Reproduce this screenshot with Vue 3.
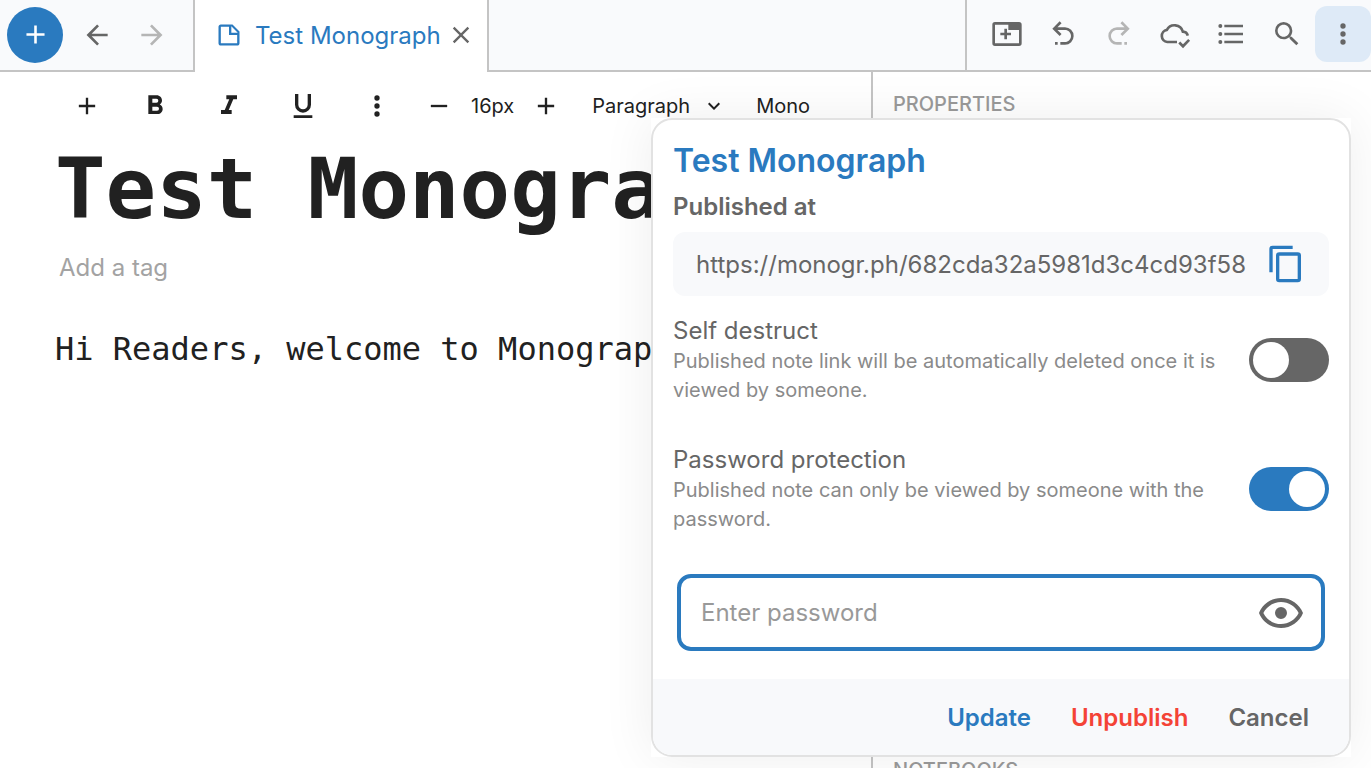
<template>
  <div class="app">
    <!-- top bar -->
    <header class="topbar">
      <div class="bar-left">
        <button class="new-btn"><svg class="ic-new" viewBox="0 0 24 24"><path :d="icons.plus" /></svg></button>
        <svg class="ic back" viewBox="0 0 24 24"><path :d="icons.back" /></svg>
        <svg class="ic faded" viewBox="0 0 24 24"><path :d="icons.forward" /></svg>
      </div>
      <div class="tab">
        <svg class="ic-note" viewBox="0 0 24 24"><path :d="icons.note" /></svg>
        <span class="tab-title">Test Monograph</span>
        <svg class="ic-close" viewBox="0 0 24 24"><path :d="icons.close" /></svg>
      </div>
      <div class="bar-fill" />
      <div class="bar-right">
        <div v-for="item in actions" :key="item.name" class="action" :class="{ active: item.active }">
          <svg
            class="ic"
            :class="{ faded: item.faded, stroked: item.stroked }"
            viewBox="0 0 24 24"
          ><path :d="icons[item.name]" /></svg>
        </div>
      </div>
    </header>

    <div class="main">
      <section class="editor">
        <div class="toolbar">
          <svg class="tool plus" viewBox="0 0 24 24"><path :d="icons.plus" /></svg>
          <svg class="tool bold" viewBox="0 0 24 24"><path :d="icons.bold" /></svg>
          <svg class="tool italic" viewBox="0 0 24 24"><path :d="icons.italic" /></svg>
          <svg class="tool under" viewBox="0 0 24 24"><path :d="icons.underline" /></svg>
          <svg class="tool more" viewBox="0 0 24 24"><path :d="icons.dots" /></svg>
          <svg class="tool minus" viewBox="0 0 24 24"><path :d="icons.minus" /></svg>
          <span class="size">16px</span>
          <svg class="tool plus2" viewBox="0 0 24 24"><path :d="icons.plus" /></svg>
          <span class="para">Paragraph</span>
          <svg class="tool chev" viewBox="0 0 24 24"><path :d="icons.chevron" /></svg>
          <span class="fam">Mono</span>
        </div>
        <h1 class="title">Test Monograph</h1>
        <div class="tag">Add a tag</div>
        <p class="body-text">Hi Readers, welcome to Monograph</p>
      </section>
      <aside class="side">
        <div class="side-label">PROPERTIES</div>
        <div class="side-label bottom">NOTEBOOKS</div>
      </aside>
    </div>

    <!-- publish dialog -->
    <div class="dialog-wrap">
      <div class="dialog">
        <div class="dialog-body">
          <div class="d-title">Test Monograph</div>
          <div class="d-sub">Published at</div>
          <div class="url-box">
            <span class="url">https://monogr.ph/682cda32a5981d3c4cd93f58</span>
            <svg class="ic-copy" viewBox="0 0 24 24"><path :d="icons.copy" /></svg>
          </div>
          <div class="options">
            <div v-for="opt in options" :key="opt.title" class="option">
              <div class="opt-text">
                <div class="opt-title">{{ opt.title }}</div>
                <div class="opt-desc">{{ opt.desc }}</div>
              </div>
              <div class="toggle" :class="{ on: opt.on }"><span class="knob" /></div>
            </div>
          </div>
          <div class="pass-box">
            <span class="pass-ph">Enter password</span>
            <svg class="ic-eye" viewBox="0 0 24 24"><path :d="icons.eye" /></svg>
          </div>
        </div>
        <div class="dialog-foot">
          <span class="f-btn blue">Update</span>
          <span class="f-btn red">Unpublish</span>
          <span class="f-btn grey">Cancel</span>
        </div>
      </div>
    </div>
  </div>
</template>

<script setup>
const icons = {
  plus: 'M19,13H13V19H11V13H5V11H11V5H13V11H19V13Z',
  back: 'M20,11V13H8L13.5,18.5L12.08,19.92L4.16,12L12.08,4.08L13.5,5.5L8,11H20Z',
  forward: 'M4,11V13H16L10.5,18.5L11.92,19.92L19.84,12L11.92,4.08L10.5,5.5L16,11H4Z',
  note: 'M14 10H19.5L14 4.5V10M5 3H15L21 9V19C21 20.11 20.11 21 19 21H5C3.89 21 3 20.11 3 19V5C3 3.89 3.89 3 5 3M5 5V19H19V12H12V5H5Z',
  close: 'M19,6.41L17.59,5L12,10.59L6.41,5L5,6.41L10.59,12L5,17.59L6.41,19L12,13.41L17.59,19L19,17.59L13.41,12L19,6.41Z',
  bold: 'M13.5,15.5H10V12.5H13.5A1.5,1.5 0 0,1 15,14A1.5,1.5 0 0,1 13.5,15.5M10,6.5H13A1.5,1.5 0 0,1 14.5,8A1.5,1.5 0 0,1 13,9.5H10M15.6,10.79C16.57,10.11 17.25,9 17.25,8C17.25,5.74 15.5,4 13.25,4H7V18H14.04C16.14,18 17.75,16.3 17.75,14.21C17.75,12.69 16.89,11.39 15.6,10.79Z',
  italic: 'M10,4V7H12.21L8.79,15H6V18H14V15H11.79L15.21,7H18V4H10Z',
  underline: 'M5,21H19V19H5V21M12,17A6,6 0 0,0 18,11V3H15.5V11A3.5,3.5 0 0,1 12,14.5A3.5,3.5 0 0,1 8.5,11V3H6V11A6,6 0 0,0 12,17Z',
  dots: 'M12,16A2,2 0 0,1 14,18A2,2 0 0,1 12,20A2,2 0 0,1 10,18A2,2 0 0,1 12,16M12,10A2,2 0 0,1 14,12A2,2 0 0,1 12,14A2,2 0 0,1 10,12A2,2 0 0,1 12,10M12,4A2,2 0 0,1 14,6A2,2 0 0,1 12,8A2,2 0 0,1 10,6A2,2 0 0,1 12,4Z',
  minus: 'M19,13H5V11H19V13Z',
  chevron: 'M7.41,8.58L12,13.17L16.59,8.58L18,10L12,16L6,10L7.41,8.58Z',
  tabPlus: 'M3,3A2,2 0 0,0 1,5V19A2,2 0 0,0 3,21H21A2,2 0 0,0 23,19V5A2,2 0 0,0 21,3H3M3,5H13V9H21V19H3V5M10,8V11H7V13H10V16H12V13H15V11H12V8H10Z',
  undo: 'M13.5,7A6.5,6.5 0 0,1 20,13.5A6.5,6.5 0 0,1 13.5,20H10V18H13.5C16,18 18,16 18,13.5C18,11 16,9 13.5,9H7.83L10.91,12.09L9.5,13.5L4,8L9.5,2.5L10.92,3.91L7.83,7H13.5M6,18H8V20H6V18Z',
  redo: 'M10.5,7A6.5,6.5 0 0,0 4,13.5A6.5,6.5 0 0,0 10.5,20H14V18H10.5C8,18 6,16 6,13.5C6,11 8,9 10.5,9H16.17L13.09,12.09L14.5,13.5L20,8L14.5,2.5L13.08,3.91L16.17,7H10.5M18,18H16V20H18V18Z',
  cloud: 'M13.5,18H6.2A4.6,4.6 0 0,1 5.9,8.9A6.5,6.5 0 0,1 17.9,10.2A4,4 0 0,1 21.6,13.2M15.2,18.4L18,21.2L22.6,16.4',
  list: 'M7,5H21V7H7V5M7,13V11H21V13H7M4,4.5A1.5,1.5 0 0,1 5.5,6A1.5,1.5 0 0,1 4,7.5A1.5,1.5 0 0,1 2.5,6A1.5,1.5 0 0,1 4,4.5M4,10.5A1.5,1.5 0 0,1 5.5,12A1.5,1.5 0 0,1 4,13.5A1.5,1.5 0 0,1 2.5,12A1.5,1.5 0 0,1 4,10.5M7,19V17H21V19H7M4,16.5A1.5,1.5 0 0,1 5.5,18A1.5,1.5 0 0,1 4,19.5A1.5,1.5 0 0,1 2.5,18A1.5,1.5 0 0,1 4,16.5Z',
  search: 'M9.5,3A6.5,6.5 0 0,1 16,9.5C16,11.11 15.41,12.59 14.44,13.73L14.71,14H15.5L20.5,19L19,20.5L14,15.5V14.71L13.73,14.44C12.59,15.41 11.11,16 9.5,16A6.5,6.5 0 0,1 3,9.5A6.5,6.5 0 0,1 9.5,3M9.5,5C7,5 5,7 5,9.5C5,12 7,14 9.5,14C12,14 14,12 14,9.5C14,7 12,5 9.5,5Z',
  copy: 'M19,21H8V7H19M19,5H8A2,2 0 0,0 6,7V21A2,2 0 0,0 8,23H19A2,2 0 0,0 21,21V7A2,2 0 0,0 19,5M16,1H4A2,2 0 0,0 2,3V17H4V3H16V1Z',
  eye: 'M12,9A3,3 0 0,1 15,12A3,3 0 0,1 12,15A3,3 0 0,1 9,12A3,3 0 0,1 12,9M12,4.5C17,4.5 21.27,7.61 23,12C21.27,16.39 17,19.5 12,19.5C7,19.5 2.73,16.39 1,12C2.73,7.61 7,4.5 12,4.5M3.18,12C4.83,15.36 8.24,17.5 12,17.5C15.76,17.5 19.17,15.36 20.82,12C19.17,8.64 15.76,6.5 12,6.5C8.24,6.5 4.83,8.64 3.18,12Z',
}

const actions = [
  { name: 'tabPlus' },
  { name: 'undo' },
  { name: 'redo', faded: true },
  { name: 'cloud', stroked: true },
  { name: 'list' },
  { name: 'search' },
  { name: 'dots', active: true },
]

const options = [
  {
    title: 'Self destruct',
    desc: 'Published note link will be automatically deleted once it is viewed by someone.',
    on: false,
  },
  {
    title: 'Password protection',
    desc: 'Published note can only be viewed by someone with the password.',
    on: true,
  },
]
</script>

<style>
html,
body {
  margin: 0;
  height: 100%;
  overflow: hidden;
  background: #fff;
}
</style>

<style scoped>
.app {
  position: relative;
  width: 1371px;
  height: 768px;
  overflow: hidden;
  font-family: Inter, 'Noto Sans', sans-serif;
  color: #212121;
}

svg {
  display: block;
  flex: none;
  fill: currentColor;
}

.topbar {
  display: flex;
  height: 72px;
  background: #f9fafc;
}

.bar-left {
  display: flex;
  align-items: center;
  width: 193px;
  height: 72px;
  box-sizing: border-box;
  padding-left: 7px;
  border-bottom: 2px solid #c4c4c4;
  color: #666;
}

.new-btn {
  display: flex;
  align-items: center;
  justify-content: center;
  width: 56px;
  height: 56px;
  margin: -1px 18px 0 0;
  padding: 0;
  border: none;
  border-radius: 50%;
  background: #2a7abf;
  color: #fff;
}

.ic-new {
  width: 31px;
  height: 31px;
}

.ic {
  width: 32px;
  height: 32px;
  color: #666;
}

.ic.back {
  margin-right: 23px;
}

.ic.faded {
  color: #b5b5b5;
}

.ic.stroked {
  fill: none;
  stroke: currentColor;
  stroke-width: 2;
}

.tab {
  display: flex;
  align-items: center;
  flex: none;
  width: 296px;
  height: 72px;
  box-sizing: border-box;
  padding: 0 15px 2px 20px;
  border-left: 2px solid #c4c4c4;
  border-right: 2px solid #c4c4c4;
  background: #fff;
}

.ic-note {
  width: 28px;
  height: 28px;
  margin-right: 12px;
  color: #2a7abf;
}

.tab-title {
  font-size: 24px;
  color: #2a7abf;
  white-space: nowrap;
}

.ic-close {
  width: 28px;
  height: 28px;
  margin-left: 6px;
  color: #666;
}

.bar-fill {
  flex: 1;
  border-bottom: 2px solid #c4c4c4;
}

.bar-right {
  display: flex;
  flex: none;
  align-items: flex-start;
  justify-content: flex-end;
  width: 406px;
  box-sizing: border-box;
  padding-top: 6px;
  border-left: 2px solid #c4c4c4;
  border-bottom: 2px solid #c4c4c4;
}

.action {
  display: flex;
  flex: none;
  align-items: center;
  justify-content: center;
  width: 56px;
  height: 56px;
  border-radius: 12px;
}

.action.active {
  background: #deeaf7;
}

.main {
  display: flex;
  height: 696px;
}

.editor {
  width: 873px;
  flex: none;
  box-sizing: border-box;
  padding-left: 55px;
  border-right: 2px solid #c4c4c4;
}

.side {
  flex: 1;
  display: flex;
  flex-direction: column;
  justify-content: space-between;
  padding-left: 20px;
}

.side-label {
  font-size: 20px;
  font-weight: 500;
  color: #9a9a9a;
  padding-top: 20px;
  line-height: 24px;
}

.side-label.bottom {
  padding-top: 0;
  margin-bottom: -14px;
}

.toolbar {
  display: flex;
  align-items: center;
  height: 68px;
  margin-left: -55px;
  font-size: 20px;
  color: #212121;
}

.tool {
  width: 28px;
  height: 28px;
}

.plus { margin-left: 73px; }
.bold { width: 32px; height: 32px; margin-left: 38px; }
.italic { width: 32px; height: 32px; margin-left: 42px; }
.under { width: 32px; height: 32px; margin-left: 42px; }
.more { width: 32px; height: 32px; margin-left: 42px; }
.minus { margin-left: 32px; }
.size { margin-left: 18px; }
.plus2 { margin-left: 18px; }
.para { margin-left: 32px; }
.chev { width: 24px; height: 24px; margin-left: 12px; }
.fam { margin-left: 30px; }

.title {
  margin: -1px 0 0;
  font-family: 'DejaVu Sans Mono', 'Liberation Mono', monospace;
  font-size: 84px;
  font-weight: 700;
  line-height: 100px;
  white-space: nowrap;
  color: #212121;
}

.tag {
  margin-top: 13px;
  padding-left: 4px;
  font-size: 24px;
  line-height: 32px;
  color: #a3a3a3;
}

.body-text {
  margin: 43px 0 0;
  font-family: 'DejaVu Sans Mono', 'Liberation Mono', monospace;
  font-size: 32px;
  line-height: 44px;
  white-space: nowrap;
  color: #212121;
}

.dialog-wrap {
  position: absolute;
  left: 651px;
  top: 118px;
  width: 700px;
  height: 639px;
  background: #fff;
  box-shadow: 0 0 50px rgba(0, 0, 0, 0.07);
}

.dialog {
  display: flex;
  flex-direction: column;
  height: 100%;
  box-sizing: border-box;
  overflow: hidden;
  background: #fff;
  border: 2px solid #e2e2e2;
  border-radius: 21px;
}

.dialog-body {
  flex: 1;
  padding: 22px 20px 0;
  min-height: 0;
}

.d-title {
  font-size: 32px;
  font-weight: 600;
  line-height: 38px;
  color: #2a7abf;
}

.d-sub {
  margin-top: 12px;
  font-size: 24px;
  font-weight: 600;
  line-height: 30px;
  color: #666;
}

.url-box {
  display: flex;
  align-items: center;
  justify-content: space-between;
  height: 64px;
  margin-top: 10px;
  padding: 0 24px 0 23px;
  border-radius: 12px;
  background: #f8f9fb;
  font-size: 24px;
  color: #666;
}

.url {
  white-space: nowrap;
}

.ic-copy {
  width: 40px;
  height: 40px;
  margin-right: -1px;
  color: #2a7abf;
}

.options {
  margin-top: 20px;
}

.option {
  display: flex;
  align-items: center;
  justify-content: space-between;
}

.opt-text {
  width: 560px;
  height: 129px;
}

.opt-title {
  font-size: 24px;
  line-height: 29px;
  margin-bottom: 2px;
  color: #666;
}

.opt-desc {
  font-size: 20px;
  line-height: 29px;
  color: #8a8a8a;
}

.toggle {
  display: flex;
  align-items: center;
  width: 80px;
  height: 44px;
  margin-top: -41px;
  padding: 4px;
  box-sizing: border-box;
  border-radius: 22px;
  background: #666;
}

.toggle.on {
  justify-content: flex-end;
  background: #2a7abf;
}

.knob {
  width: 36px;
  height: 36px;
  border-radius: 50%;
  background: #fff;
}

.pass-box {
  display: flex;
  align-items: center;
  justify-content: space-between;
  height: 77px;
  box-sizing: border-box;
  margin: 0 4px;
  padding: 0 16px 0 20px;
  border: 4px solid #2a7abf;
  border-radius: 14px;
}

.pass-ph {
  font-size: 24px;
  color: #999;
}

.ic-eye {
  width: 48px;
  height: 48px;
  color: #666;
}

.dialog-foot {
  display: flex;
  align-items: center;
  justify-content: flex-end;
  gap: 40px;
  height: 76px;
  padding-right: 40px;
  background: #f8f9fb;
}

.f-btn {
  font-size: 24px;
  font-weight: 600;
}

.blue { color: #2a7abf; }
.red { color: #f44336; }
.grey { color: #666; }
</style>
